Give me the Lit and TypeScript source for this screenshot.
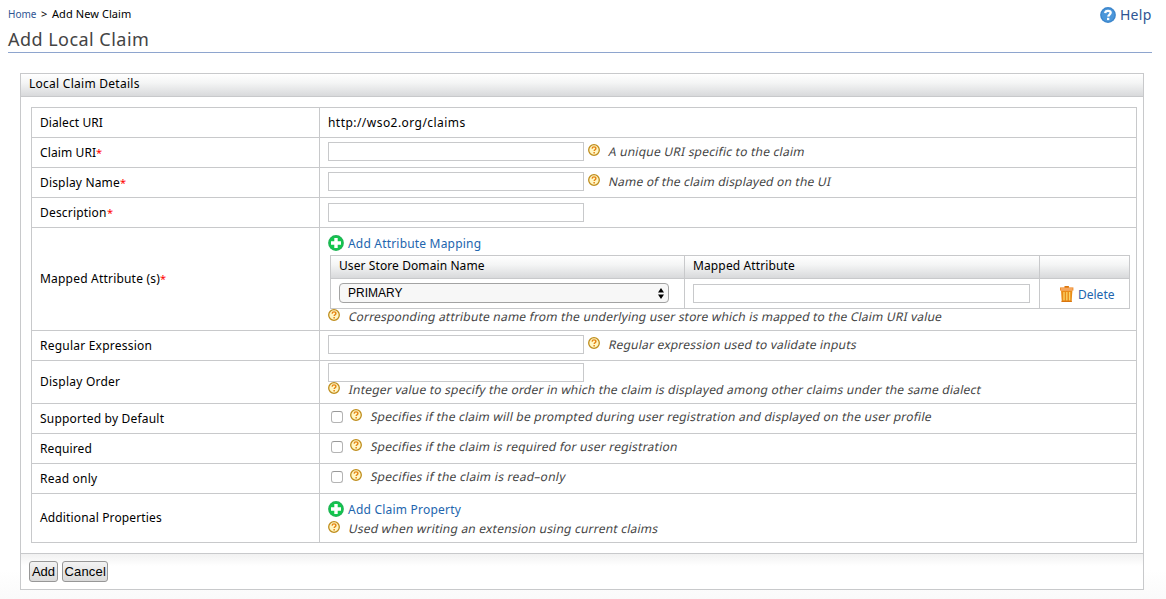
import { LitElement, html, css, nothing } from "lit";
import { customElement, property } from "lit/decorators.js";

/* A single line of text whose tracking is adjusted to fill a given width. */
@customElement("fit-text")
class FitText extends LitElement {
  @property({ type: Number }) width = 0;
  @property() text = "";
  static styles = css`
    :host { display: inline-block; white-space: pre; flex: none; }
    .run { display: inline-block; white-space: pre; }
  `;
  render() {
    return html`<span class="run">${this.text}</span>`;
  }
  updated() {
    const run = this.renderRoot.querySelector(".run") as HTMLElement;
    run.style.letterSpacing = "0px";
    const natural = run.offsetWidth;
    run.style.letterSpacing = `${(this.width - natural) / this.text.length}px`;
    this.style.width = `${this.width}px`;
  }
}

const fit = (text: string, width: number) => html`<fit-text .text=${text} .width=${width}></fit-text>`;

const hintIcon = html`<svg class="hint-icon" width="12" height="12" viewBox="0 0 12 12">
  <circle cx="6" cy="6" r="5.3" fill="#fff6c4" stroke="#bf8d1c" stroke-width="1.3" />
  <path d="M4.1 4.6C4.2 3.3 5 2.9 6 2.9c1.1 0 1.9.6 1.9 1.6 0 1.2-1.6 1.3-1.7 2.5" fill="none" stroke="#e58412" stroke-width="1.4" />
  <rect x="5.4" y="8" width="1.5" height="1.5" fill="#e58412" />
</svg>`;

const plusIcon = html`<svg class="plus-icon" width="16" height="16" viewBox="0 0 16 16">
  <circle cx="8" cy="8" r="7.9" fill="#1fb455" />
  <circle cx="8" cy="8" r="6.6" fill="#12c74d" />
  <path d="M8 3v10M3 8h10" stroke="#fff" stroke-width="3.4" />
</svg>`;

const helpIcon = html`<svg width="16" height="16" viewBox="0 0 16 16">
  <circle cx="8" cy="8" r="7.9" fill="#3c86cc" />
  <circle cx="8" cy="8" r="6.5" fill="#4c97da" />
  <path d="M5.2 6.1C5.3 4.4 6.5 3.8 8 3.8c1.6 0 2.7.7 2.7 2 0 1.7-2.4 1.8-2.5 3.8" fill="none" stroke="#fff" stroke-width="2.3" />
  <rect x="7" y="10.8" width="2.3" height="2.3" fill="#fff" />
</svg>`;

const trashIcon = html`<svg width="14" height="16" viewBox="0 0 14 16">
  <path d="M4.5 0h4.4v2H4.5z" fill="#d9750f" />
  <path d="M1 4.5h11.4L11.6 16H1.8z" fill="#e98c17" />
  <path d="M4 6v8.6M6.8 6v8.6M9.6 6v8.6" stroke="#fbd56a" stroke-width="1.3" />
  <path d="M0 1.4h13.4v3.2H0z" fill="#ee8d2c" />
  <path d="M1 3h11.4" stroke="#fbb880" stroke-width="1.2" />
  <path d="M1.5 15.4h10.3" stroke="#d9750f" stroke-width="1.2" />
</svg>`;

const hint = (text: string, width: number) => html`<div class="hint">${hintIcon}<span class="slant">${fit(text, width)}</span></div>`;

@customElement("app-root")
class AppRoot extends LitElement {
  static styles = css`
    :host {
      display: block;
      box-sizing: border-box;
      height: 599px;
      padding: 6px 14px 0 8px;
      overflow: hidden;
      background: linear-gradient(#fff 570px, #fafafa);
      font: 12px/16px "Noto Sans", "Open Sans", sans-serif;
      color: #000;
    }
    svg { display: block; flex: none; }
    .top { display: flex; justify-content: space-between; height: 46px; border-bottom: 1px solid #8ea5ce; }
    .crumbs { display: flex; font-size: 11px; height: 16px; }
    .crumbs .home { font-size: 10px; color: #2f5593; width: 33px; }
    .crumbs .sep { width: 11px; }
    h1 { margin: 5px 0 0; font-size: 18px; line-height: 24px; font-weight: 400; color: #444; }
    .help { display: flex; gap: 4px; padding-top: 1px; height: 16px; font-size: 14px; color: #2f5593; }
    .panel { margin: 20px 8px 0 12px; border: 1px solid #c8c9cb; height: 515px; }
    .bar { background: linear-gradient(#fff, #f4f5f5 40%, #d8d9db); border-bottom: 1px solid #c8c9cb; height: 22px; box-sizing: content-box; }
    .panel > .bar { padding-left: 8px; line-height: 20px; }
    .form { margin: 10px 6px 10px 10px; border: 1px solid #c8c9cb; background: #fff; }
    .row { display: grid; grid-template-columns: 287px 1fr; border-bottom: 1px solid #c8c9cb; height: 29px; }
    .row:last-child { border-bottom: 0; height: 48px; }
    .row.mapped { height: 102px; }
    .row.order { height: 42px; }
    .label { display: flex; align-items: center; padding-left: 8px; }
    .req { color: #f00; font-size: 11px; }
    .value { border-left: 1px solid #c8c9cb; padding-left: 8px; }
    .value.line { display: flex; align-items: flex-start; }
    .plain { padding-top: 7px; }
    .field { appearance: none; box-sizing: border-box; display: block; margin: 4px 4px 0 0; width: 256px; height: 19px; border: 1px solid #c8c9cb; border-radius: 0; background: #fff; padding: 0 3px; outline: 0; }
    .field.low { margin-top: 5px; }
    .field.high { margin-top: 2px; }
    .hint { display: flex; align-items: flex-start; gap: 8px; color: #444; height: 16px; }
    .slant { transform: skewX(-12deg); transform-origin: 0 12px; }
    .value.line .hint { padding-top: 6px; }
    .value.check .hint { padding-top: 5px; }
    .tick { appearance: none; box-sizing: border-box; margin: 7px 7px 0 3px; width: 12px; height: 12px; border: 1px solid #b4b4b4; border-top-color: #999; border-radius: 3px; background: #fff; }
    .add { display: flex; gap: 4px; color: #2265ae; height: 16px; padding-top: 7px; }
    .add fit-text, .del fit-text { margin-top: 1px; }
    .grid { margin: 4px 6px 0 2px; border: 1px solid #c8c9cb; height: 52px; }
    .cols { display: grid; grid-template-columns: 353px 355px 1fr; }
    .cols > div { padding-left: 8px; }
    .cols > div + div { border-left: 1px solid #c8c9cb; }
    .cols.bar > div { line-height: 20px; height: 22px; }
    .cols.body { height: 29px; }
    .select { display: flex; justify-content: space-between; box-sizing: border-box; margin-top: 4px; width: 330px; height: 20px; border: 1px solid #a3a3a3; border-radius: 4px; background: #f7f7f7; padding: 0 4px 0 8px; font: 12px/18px "Liberation Sans", Arial, sans-serif; }
    .select svg { margin-top: 4px; }
    .cols .field { width: 337px; margin-top: 5px; }
    .cols .del { display: flex; padding: 7px 0 0 20px; gap: 4px; color: #2265ae; }
    .extra .hint { padding-top: 4px; }
    .footer { display: flex; gap: 4px; padding: 7px 8px; border-top: 1px solid #c8c9cb; height: 21px; background: linear-gradient(#f1f1f1, #fff 12px, #fff); }
    .btn { appearance: none; box-sizing: border-box; height: 21px; width: 29px; padding: 0; border: 1px solid #979797; border-radius: 3px; background: linear-gradient(#f3f3f3, #dadada); font: 13px/19px "Liberation Sans", Arial, sans-serif; color: #000; text-align: center; }
    .btn.wide { width: 46px; }
  `;

  private label(text: string, width: number, required = false) {
    return html`<div class="label">${fit(text, width)}${required ? html`<span class="req">${fit("*", 5)}</span>` : nothing}</div>`;
  }

  private inputRow(text: string, width: number, required: boolean, help = "", helpWidth = 0) {
    return html`<div class="row">
      ${this.label(text, width, required)}
      <div class="value line">
        <input class="field ${help ? "" : "low"}" type="text" />
        ${help ? hint(help, helpWidth) : nothing}
      </div>
    </div>`;
  }

  private checkRow(text: string, width: number, help: string, helpWidth: number) {
    return html`<div class="row">
      ${this.label(text, width)}
      <div class="value line check"><input class="tick" type="checkbox" />${hint(help, helpWidth)}</div>
    </div>`;
  }

  render() {
    return html`
      <header class="top">
        <div>
          <nav class="crumbs">
            <span class="home">${fit("Home", 28)}</span>
            <span class="sep">&gt;</span>
            <span>${fit("Add New Claim", 79)}</span>
          </nav>
          <h1>${fit("Add Local Claim", 141)}</h1>
        </div>
        <div class="help">${helpIcon}${fit("Help", 32)}</div>
      </header>
      <section class="panel">
        <div class="bar">${fit("Local Claim Details", 111)}</div>
        <div class="form">
          <div class="row">
            ${this.label("Dialect URI", 63)}
            <div class="value plain">${fit("http://wso2.org/claims", 138)}</div>
          </div>
          ${this.inputRow("Claim URI", 56, true, "A unique URI specific to the claim", 196)}
          ${this.inputRow("Display Name", 80, true, "Name of the claim displayed on the UI", 222)}
          ${this.inputRow("Description", 67, true)}
          <div class="row mapped">
            ${this.label("Mapped Attribute (s)", 120, true)}
            <div class="value">
              <div class="add">${plusIcon}${fit("Add Attribute Mapping", 133)}</div>
              <div class="grid">
                <div class="cols bar">
                  <div>${fit("User Store Domain Name", 146)}</div>
                  <div>${fit("Mapped Attribute", 102)}</div>
                  <div></div>
                </div>
                <div class="cols body">
                  <div>
                    <div class="select">
                      ${fit("PRIMARY", 54)}
                      <svg width="6" height="11" viewBox="0 0 6 11"><path d="M3 0l3 4.5H0zM3 11L0 6.5h6z" /></svg>
                    </div>
                  </div>
                  <div><input class="field" type="text" /></div>
                  <div class="del">${trashIcon}${fit("Delete", 37)}</div>
                </div>
              </div>
              ${hint("Corresponding attribute name from the underlying user store which is mapped to the Claim URI value", 593)}
            </div>
          </div>
          ${this.inputRow("Regular Expression", 112, false, "Regular expression used to validate inputs", 248)}
          <div class="row order">
            ${this.label("Display Order", 80)}
            <div class="value">
              <input class="field high" type="text" />
              ${hint("Integer value to specify the order in which the claim is displayed among other claims under the same dialect", 632)}
            </div>
          </div>
          ${this.checkRow("Supported by Default", 124, "Specifies if the claim will be prompted during user registration and displayed on the user profile", 561)}
          ${this.checkRow("Required", 52, "Specifies if the claim is required for user registration", 307)}
          ${this.checkRow("Read only", 57, "Specifies if the claim is read–only", 195)}
          <div class="row extra">
            ${this.label("Additional Properties", 122)}
            <div class="value">
              <div class="add">${plusIcon}${fit("Add Claim Property", 113)}</div>
              ${hint("Used when writing an extension using current claims", 309)}
            </div>
          </div>
        </div>
        <div class="footer">
          <button class="btn">Add</button>
          <button class="btn wide">${fit("Cancel", 41)}</button>
        </div>
      </section>
    `;
  }
}
